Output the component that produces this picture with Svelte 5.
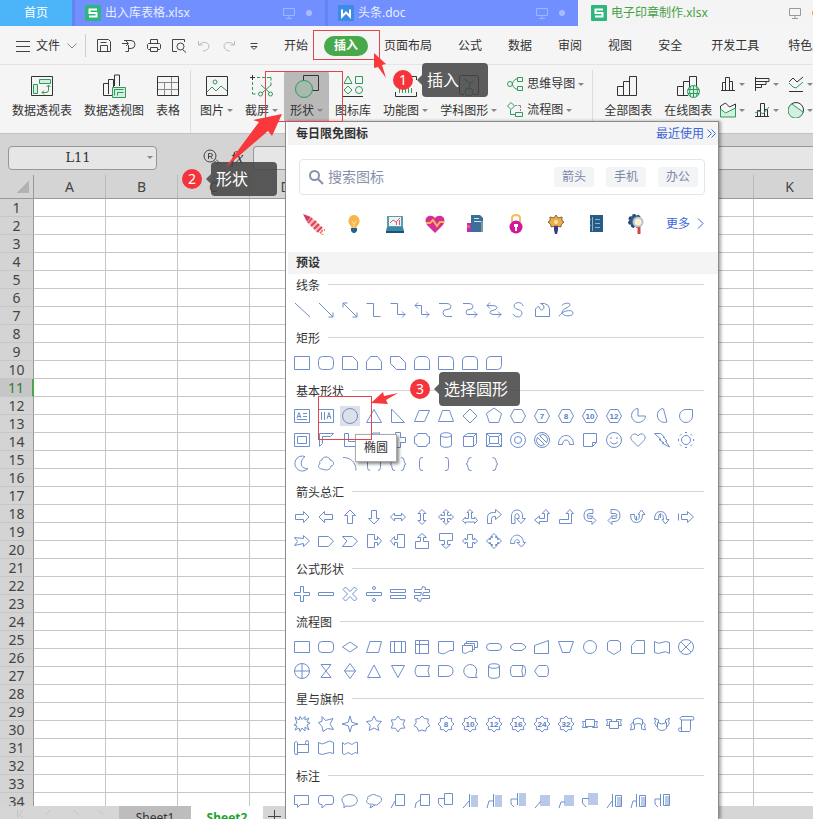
<script>
  const docs = [
    { name: '出入库表格.xlsx', kind: 'sheet' },
    { name: '头条.doc', kind: 'word' },
    { name: '电子印章制作.xlsx', kind: 'sheet', open: true }
  ];

  const quick = [
    { label: '保存', d: 'M1.5 1.5h11l2 2v10h-13zM4.5 13.5v-6h7v6M4.5 4.5h6' },
    { label: '输出', d: 'M3 2.5h7a4 4 0 0 1 0 8h-3M1 5.5h6M5 3l2.5 2.5L5 8M7.5 7v6.5h-3' },
    { label: '打印', d: 'M4.5 5.5v-4h7v4M4.5 11.5h-2l-1-1v-4l1-1h11l1 1v4l-1 1h-2M4.5 9.5h7v4h-7z' },
    { label: '打印预览', d: 'M6 13.5H1.5v-12h12V4M12 12l3 2.5M6 8.5a3.5 3.5 0 1 0 7 0a3.5 3.5 0 1 0 -7 0' },
    { label: '撤销', d: 'M2.5 3v4h4M3 7c3-4 10-3 10 1c0 3-3 5-6 5', dim: true },
    { label: '恢复', d: 'M13.5 3v4h-4M13 7c-3-4-10-3-10 1c0 3 3 5 6 5', dim: true },
    { label: '更多命令', d: 'M4.5 5.5h7M5 8.5l3 3l3-3z' }
  ];

  const menus = ['页面布局', '公式', '数据', '审阅', '视图', '安全', '开发工具', '特色应用'];

  const bars = 'M1.5 12.5h6v9h-6zM7.5 7.5h6v14h-6zM13.5 2.5h7v19h-7z';

  const pivots = [
    {
      label: '数据透视表',
      dark: 'M1.5 2.5h21v19h-21z',
      tint: 'M9.500 5.500h11v4h-11zM3.500 10.500h4v9h-4z',
      green: 'M18.500 11v5q0 2.500-2.500 2.500h-4M16.500 13l2-2l2 2M14 16.500l-2 2l2 2'
    },
    {
      label: '数据透视图',
      dark: 'M10.500 21.500h-9v-12h5M6.500 20V5.500h5V13M12.500 12v-11h5v11',
      tint: 'M10.500 13.500h13v10h-13z',
      green: 'M12.500 21.500v-6h9M15.500 21.500v-3h6'
    },
    {
      label: '表格',
      dark: 'M1.500 2.500h21v19h-21z',
      grey: 'M2 8.500h20M2 15.500h20M8.500 8.500v13M15.500 3v18'
    }
  ];

  const inserts = [
    {
      label: '图片',
      arrow: true,
      dark: 'M1.500 2.500h21v19h-21z',
      green: 'M2 18l5-5l4 4l5-5l6 5M8 8a2 2 0 1 0 4 0a2 2 0 1 0-4 0'
    },
    {
      label: '截屏',
      arrow: true,
      dark: 'M2.500 1v5M0 3.500h5',
      green: 'M7 3.500h3m2 0h3m2 0h4v3m0 2v3M2.500 8v3m0 2v3m0 2v2h3M11 11l9 8M21 11l-9 8M8.500 20a2 2 0 1 0 4 0a2 2 0 1 0-4 0M18.500 20a2 2 0 1 0 4 0a2 2 0 1 0-4 0'
    },
    {
      label: '形状',
      arrow: true,
      active: true,
      dark: 'M8.500 8V1.500h15v15h-6',
      green: 'M.500 15a8 8 0 1 0 17 0a8 8 0 1 0-17 0'
    },
    {
      label: '图标库',
      dark: 'M2 22.500h20',
      green: 'M3 9.500h8l-4-7.500zM14.500 2.500h7v7h-7zM3 16l4-4l4 4l-4 4zM14.500 16a3.500 3.500 0 1 0 7 0a3.500 3.500 0 1 0-7 0'
    },
    {
      label: '功能图',
      arrow: true,
      dark: 'M1.500 6V2.500h21V6M1.500 18v4.500h21V18',
      green: 'M5.500 14v5M8.500 14v5M11.500 14v5M14.500 14v5M17.500 14v5'
    },
    {
      label: '学科图形',
      arrow: true,
      dark: 'M7 20.500H4.500q-2 0-2-2v-15q0-2 2-2h15q2 0 2 2v15q0 2-2 2h-3',
      green: 'M7 5l6 4l4-2M13 9l-1 7M8 18a4 4 0 1 0 8 0a4 4 0 1 0-8 0'
    }
  ];

  const charts = [
    { label: '全部图表', dark: bars },
    {
      label: '在线图表',
      dark: 'M12 21.500H1.500v-9h6V21M7.500 12.500v-5h6v8M13.500 12V2.500h7V12',
      tint: 'M11.500 17.500a6 6 0 1 0 12 0a6 6 0 1 0-12 0',
      green: 'M12 15.500h11M12 19.500h11M17.500 12v11M14.500 12.500q-2 5 0 10M20.500 12.500q2 5 0 10'
    }
  ];

  const miniCharts = [
    { label: '柱形图', dark: 'M1 14.500h14M2.500 14V6.500h3V14M5.500 14V1.500h4V14M9.500 5.500h3V14' },
    { label: '条形图', dark: 'M1.500 1v14M2 2.500h13v3H2M2 5.500h10v3H2M7.500 8.500v3H2' },
    { label: '折线图', dark: 'M1 6l4-4l4 4l6-5M1 15.500h14', green: 'M1 7l4 4l3 1l7-6' },
    { label: '面积图', dark: 'M.500 15V4l5-3l4 4l6-3v13', tint: 'M.500 15V7l5 4l4-2l6-3v9z' },
    { label: '组合图', dark: 'M1 14.500h14M3.500 14V8.500h3M6.500 14V1.500h4V14M10.500 7.500h3V14', green: 'M1 11l4-2l4 3l6-7' },
    { label: '饼图', dark: 'M.500 8a7.500 7.500 0 1 0 15 0a7.500 7.500 0 1 0-15 0', tint: 'M4 2a7.500 7.500 0 1 0 11 8z' }
  ];

  // points on a ring, alternating between two radii when inner is given
  function ring(count, outer, inner = 0, turn = -90) {
    const total = inner ? count * 2 : count;
    let d = '';
    for (let i = 0; i < total; i++) {
      const r = inner && i % 2 ? inner : outer;
      const a = ((turn + (i * 360) / total) * Math.PI) / 180;
      d += (i ? 'L' : 'M') + (8 + r * Math.cos(a)).toFixed(2) + ' ' + (8 + r * Math.sin(a)).toFixed(2);
    }
    return d + 'z';
  }

  const hexagon = 'M4 1.500h8l3.500 6.500l-3.500 6.500h-8L.500 8z';
  const circle = 'M.500 8a7.500 7.500 0 1 0 15 0a7.500 7.500 0 1 0-15 0';
  const seal = ring(8, 8, 6);

  const sections = [
    {
      title: '线条',
      shapes: [
        'M1 1l15 14',
        'M1 1l14 14M15 10.500v4.500h-4.500',
        'M1 1l14 14M15 10.500v4.500h-4.500M1 5.500V1h4.500',
        'M.500 1.500h7v13h7',
        'M.500 1.500h7v11h7.500M12 9.500l3 3l-3 3',
        'M1 3.500h6.500v9H15M12 9.500l3 3l-3 3M4 .500l-3 3l3 3',
        'M1 1.500h7q5 0 5 3t-4 3q-4 0-4 3t3 4h6',
        'M1 1.500h5q5 0 5 3t-4 3q-3 0-3 3t4 2h7M12 9.500l3 3l-3 3',
        'M1 3.500h5q5 0 5 2t-4 3q-3 0-3 2t4 2h7M12 9.500l3 3l-3 3M4 .500l-3 3l3 3',
        'M13 4c-1-5-9-4-9 0c0 4 8 3 8 7c0 5-7 5-9 1',
        'M1.500 14.500V7l3-3l2 3.500c3 2 6-4 0-6h4q4.500 1 5 5v8z',
        'M4 3.500c2-3 9-3 8-.500c-1 3-7 3-8 7c0 5 11 5 11 1c0-4-11-3-14 3.500'
      ]
    },
    {
      title: '矩形',
      shapes: [
        'M.500 1.500h15v13H.500z',
        'M4.500 1.500h7q4 0 4 4v5q0 4-4 4h-7q-4 0-4-4v-5q0-4 4-4z',
        'M.500 1.500h10l5 5v8H.500z',
        'M4.500 1.500h7l4 5v8H.500v-8z',
        'M.500 1.500h9l6 6v7h-9l-6-6z',
        'M5 1.500h6q4.500 1 4.500 5v8H.500v-8q0-4 4.500-5z',
        'M.500 1.500h11q4 0 4 4v9H.500z',
        'M5 1.500h6q4.500 0 4.500 4.500v8.500H.500V6q0-4.500 4.500-4.500z',
        'M5 1.500h10.500v9q0 4-4 4H.500V6q0-4.500 4.500-4.500z'
      ]
    },
    {
      title: '基本形状',
      shapes: [
        'M.500 1.500h15v13H.500zM3 10l2-5.500l2 5.500M4 8.500h2.500M9 5.500h4M9 8.500h4M3 11.500h10',
        'M.500 1.500h15v13H.500zM3.500 4v8M6.500 4v8M9 11l2-6.500l2 6.500M9.500 8.500h3',
        { d: circle, hover: true },
        'M8 1.500l7.500 13H.500z',
        'M1.500 1v13.500h13z',
        'M5 2.500h10.500l-5 11H.500z',
        'M4.500 2.500h7l4 11H.500z',
        'M8 1l7 7l-7 7l-7-7z',
        ring(5, 8),
        hexagon,
        { d: hexagon, text: '7' },
        { d: hexagon, text: '8' },
        { d: hexagon, text: '10' },
        { d: hexagon, text: '12' },
        'M8 .500a7 7 0 1 0 7.500 7.500H8z',
        'M8 .500a7 7 0 1 0 5 13.500L9.500 1z',
        'M8 1.500h6.500V8A6.500 6.500 0 1 1 8 1.500z',
        'M.500 1.500h15v13H.500zM3.500 4.500h9v7h-9z',
        'M1.500 14.500v-13h14l-3 3h-8v7z',
        'M2.500 1.500h4v8h8v5h-12z',
        'M1 14L14 1h-7L1 7z',
        'M5.500 .500h5v5h5v5h-5v5h-5v-5h-5v-5h5z',
        'M3.500 1.500h9q0 3 3 3v7q-3 0-3 3h-9q0-3-3-3v-7q3 0 3-3z',
        'M2.500 3v10c0 3 11 3 11 0V3c0-3-11-3-11 0c0 3 11 3 11 0',
        'M1.500 4.500l4-3h9v10l-3 3h-10zM1.500 4.500h10v10M11.500 4.500l3-3',
        'M.500 1.500h15v13H.500zM3.500 4.500h9v7h-9zM.500 1.500l3 3M15.500 1.500l-3 3M.500 14.500l3-3M15.500 14.500l-3-3',
        circle + 'M4.500 8a3.500 3.500 0 1 0 7 0a3.500 3.500 0 1 0-7 0',
        circle + 'M3.500 5.500a5 5 0 0 0 7 7zM5.500 3.500a5 5 0 0 1 7 7z',
        'M.500 12.500c0-12 15-12 15 0h-4c0-6-7-6-7 0z',
        'M1.500 1.500h13v9l-4 4h-9zM10.500 14.500v-4h4',
        circle + 'M5 5v2M11 5v2M4 9.500q4 5 8 0',
        'M8 14.500L2 8.500C-2 4 5-1 8 4c3-5 10 0 6 4.500z',
        'M.500 1.500h6l4 3.500H9l4 4h-1.500l4 6L8 11h2L5 7.500h2z',
        'M3.500 8a4.500 4.500 0 1 0 9 0a4.500 4.500 0 1 0-9 0M7 .500h2M7 15.500h2M.500 7v2M15.500 7v2M2 3.500L3.500 2M14 3.500L12.500 2M2 12.500l1.500 1.500M14 12.500l-1.500 1.500',
        'M11 .500a7.500 7.500 0 1 0 3 12C5 13 6 4 11 .500z',
        'M4 4c0-4 8-4 8 0c4 0 5 6 1 6c0 4-6 5-8 3c-4 1-6-4-3-5c-1-2 0-4 2-4z',
        'M1 1.500c8 0 13 5 13 13',
        'M4 1.500q-2.500 0-2.500 3v7q0 3 2.500 3M12 1.500q2.500 0 2.500 3v7q0 3-2.500 3',
        'M5 1.500q-3 0-3 3t-2 3.500q2 0 2 3.500t3 3M11 1.500q3 0 3 3t2 3.500q-2 0-2 3.500t-3 3',
        'M9 1.500h-1q-2.500 0-2.500 3v7q0 3 2.500 3h1',
        'M7 1.500h1q2.500 0 2.500 3v7q0 3-2.500 3H7',
        'M9.500 1.500q-3.500 0-3.500 3t-2 3.500q2 0 2 3.500t3.500 3',
        'M6.500 1.500q3.500 0 3.500 3t2 3.500q-2 0-2 3.500t-3.500 3'
      ]
    },
    {
      title: '箭头总汇',
      shapes: [
        'M1.500 5.500h8v-3l5.500 5.500l-5.500 5.500v-3h-8z',
        'M14.500 5.500h-8v-3L1 8l5.500 5.500v-3h8z',
        'M5.500 14.500v-8h-3L8 1l5.500 5.500h-3v8z',
        'M5.500 1.500v8h-3L8 15l5.500-5.500h-3v-8z',
        'M.500 8l4-4v2.500h7V4l4 4l-4 4V9.500h-7V12z',
        'M8 .500l4 4H9.500v7H12l-4 4l-4-4h2.500v-7H4z',
        'M8 .500l3 3H9.500v3h3V5l3 3l-3 3V9.500h-3v3H11l-3 3l-3-3h1.500v-3h-3V11l-3-3l3-3v1.500h3v-3H5z',
        'M8 .500l3 3H9.500v6h3V8l3 3.500l-3 3V13h-9v1.500l-3-3L3.500 8v1.500h3v-6H5z',
        'M1.500 14.500v-6q0-5 6-5h2v-3l6 5l-6 5v-3h-2q-2 0-2 3v4z',
        'M1.500 14.500V7c0-8 11-8 11 0v2.500h3L11 14.500L6.500 9.500H9V7c0-3-4-3-4 0v7.500z',
        'M12 .500l3.500 4h-2v8H5.500v2.500L.500 11l5-4v2.500h5v-5H8z',
        'M12 .500l3.500 4h-2v10h-12v-4h9v-6H8z',
        'M11 .500H8q-6 0-6 6t6 6h2v3l4-4l-4-4v2H8q-3 0-3-1.500M11 .500v4H7q-2 0-2 2.500h6',
        'M5 .500h3q6 0 6 6t-6 6H6v3l-4-4l4-4v2h2q3 0 3-1.500M5 .500v4h4q2 0 2 2.500H5',
        'M.500 5.500q0 8 6 8t6-8h2.500L11.500 1L8 5.500h1.500q0 5-2 5.500M.500 5.500h4q0 6 2 6V7',
        'M.500 10.500q0-8 6-8t6 8h2.500L11.500 15L8 10.500h1.500q0-5-2-5.500M.500 10.500h4q0-6 2-6V9',
        'M.500 4.500v7M3.500 5.500h6v-3l6 5.500l-6 5.500v-3h-6z',
        'M.500 4.500l9 1v-3l6 5.500l-6 5.500v-3l-9 2l3-4z',
        'M.500 3.500h10l5 4.500l-5 5.500H.500z',
        'M.500 3.500h10l5 4.500l-5 5.500H.500L5 8z',
        'M1.500 1.500h7v5h3v-3l4 4.500l-4 4.500v-3h-3v5h-7z',
        'M14.500 1.500h-7v5h-3v-3L.500 8l4 4.500v-3h3v5h7z',
        'M1.500 15.500v-7h5v-4h-3L8 .500l4.500 4h-3v4h5v7z',
        'M1.500 .500v7h5v4h-3L8 15.500l4.500-4h-3v-4h5v-7z',
        'M.500 8l3-3v1.500h2V1.500h5v5h2V5l3 3l-3 3V9.500h-2v5h-5v-5h-2V11z',
        'M8 .500l3 3H9.500v1h2v2h1V5L15.500 8l-3 3V9.500h-1v2h-2v1H11l-3 3l-3-3h1.500v-1h-2v-2h-1V11l-3-3l3-3v1.500h1v-2h2v-1H5z',
        'M.500 10.500c0-11 12-11 13-1h2l-4 4.500l-4.500-4.500h2.500c0-4-5-4-5 1z'
      ]
    },
    {
      title: '公式形状',
      shapes: [
        'M6.500 .500h3v6h6v3h-6v6h-3v-6h-6v-3h6z',
        'M.500 6.500h15v3H.500z',
        'M1 3.500L3.500 1L8 5.500L12.500 1L15 3.500L10.500 8l4.500 4.500l-2.500 2.500L8 10.500L3.500 15L1 12.500L5.500 8z',
        'M.500 6.500h15v3H.500zM6.500 2a1.500 1.500 0 1 0 3 0a1.500 1.500 0 1 0-3 0M6.500 14a1.500 1.500 0 1 0 3 0a1.500 1.500 0 1 0-3 0',
        'M.500 3.500h15v3H.500zM.500 9.500h15v3H.500z',
        'M.500 3.500h7l1-3l3 1l-.500 2h4.500v3h-6l-1 3h7v3h-8l-1 3l-3-1l.500-2H.500v-3h6l1-3h-7z'
      ]
    },
    {
      title: '流程图',
      shapes: [
        'M.500 2.500h15v11H.500z',
        'M4 2.500h8q3.500 0 3.500 3.500v4q0 3.500-3.500 3.500H4q-3.500 0-3.500-3.500V6q0-3.500 3.500-3.500z',
        'M8 3l7.500 5L8 13L.500 8z',
        'M4 2.500h11.500l-3 11H.500z',
        'M.500 2.500h15v11H.500zM4.500 3v10M11.500 3v10',
        'M1.500 1.500h13v13h-13zM5.500 2v12M2 5.500h12',
        'M.500 2.500h15v9q-4-1-7 2t-8 0z',
        'M.500 6.500h10v6q-3-1-5 1t-5 0zM2.500 6V4.500h10v6h-2M4.500 4V2.500h11v6h-3',
        'M4 4.500h8a3.500 3.500 0 0 1 0 7H4a3.500 3.500 0 0 1 0-7z',
        'M4 4.500h8l3.500 2.500v2l-3.500 2.500H4L.500 9V7z',
        'M.500 6.500l14-5v13H.500z',
        'M.500 2.500h15l-4 11h-7z',
        'M1.500 8a6.500 6.500 0 1 0 13 0a6.500 6.500 0 1 0-13 0',
        'M4 1.500h8l2.500 2v8L8 15.500l-6.500-4v-8z',
        'M6 1.500h8.500v13h-13v-8z',
        'M.500 2.500q4 3 7.500 1t7.500 0v11q-4-3-7.500-1t-7.500 0z',
        circle + 'M3 3l10 10M13 3L3 13',
        circle + 'M8 .500v15M.500 8h15',
        'M3 1.500h10L3 14.500h10z',
        'M8 .500l5.500 7.500L8 15.500L2.500 8zM2.500 8h11',
        'M8 2l6.500 12.500h-13z',
        'M8 14.500L1.500 2.500h13z',
        'M3 2.500h12.500q-3 5 0 11H3Q-1 8 3 2.500z',
        'M.500 2.500H8q7 0 7 5.500t-7 5.500H.500z',
        'M15.500 14.500H8A6.500 6.500 0 1 1 14 11v3.500',
        'M2.500 3v10c0 3 11 3 11 0V3c0-3-11-3-11 0c0 3 11 3 11 0',
        'M3 2.500h10q2.500 0 2.500 5.500T13 13.500H3Q.500 13.500.500 8T3 2.500zM13 2.500q-2.500 5 0 11',
        'M4.500 2.500h8q2 0 2 5.500t-2 5.500h-8L.500 8z'
      ]
    },
    {
      title: '星与旗帜',
      shapes: [
        'M1 1l4 3l1-3.500l2 3l3-3v3.500l4-2l-2 4l3 1l-3 2l2 5l-4-3v4l-3-3l-2 3.500l-1-3.500l-4 2l2-4l-3-1l3-2z',
        'M4 .500l3.500 4L15 2.500L12 8l3.500 5.500l-6-1L5 15.500l-1-5L.500 6.500L4 5.500z',
        ring(4, 8, 2.5),
        ring(5, 8, 4),
        ring(6, 8, 5),
        ring(7, 8, 6),
        { d: seal, text: '8' },
        { d: seal, text: '10' },
        { d: seal, text: '12' },
        { d: seal, text: '16' },
        { d: seal, text: '24' },
        { d: seal, text: '32' },
        'M3.500 3.500h9v7h-9zM3 5.500H.500l1 3l-1 3h5v-1M13 5.500h2.500l-1 3l1 3h-5v-1',
        'M3.500 5.500h9v7h-9zM3 9.500H.500l1-3l-1-3h5v2M13 9.500h2.500l-1-3l1-3h-5v2',
        'M3.500 8.500v-5q4.500-3 9 0v5q-4.500-2-9 0zM3 6l-2.500 3l1 1l-1 4l4-1v-4M13 6l2.500 3l-1 1l1 4l-4-1v-4',
        'M3.500 6.500v6q4.500 4 9 0v-6q-4.500 3-9 0zM3 11L.500 7l1-1l-1-4l4 2v3M13 11l2.500-4l-1-1l1-4l-4 2v3',
        'M4 .500h10q2 0 2 2t-2 1.500H4Q2 4 2 2.500T4 .500zM3.500 4v8H2q-1.500 0-1.500 1.500T2 15.500h9.500q1-1 1-2V4M3.500 12v3',
        'M3.500 4.500h8v-2q0-2 1.500-2t1.500 2v10h-11M3.500 2.500v12q-3 1-3-2v-10q2-2 3 0M11.500 4.500h3',
        'M.500 2.500q4 3 7.500 0t7.500 0v11q-4-2-7.500 0t-7.500 0z',
        'M.500 2.500q2 3 4 1q2-2 3.500 0q2 2 3.500 0q2-2 4-1v11q-2-2-4 0q-2 2-3.500 0q-2-2-3.500 0q-2 2-4 0z'
      ]
    },
    {
      title: '标注',
      shapes: [
        'M.500 2.500h14v9h-8l-3 3v-3h-3z',
        'M3 2.500h10q2.500 0 2.500 2.500v4q0 2.500-2.500 2.500H8l-4 3.500v-3.500H3Q.500 11.500.500 9V5Q.500 2.500 3 2.500z',
        'M4 13l-2 2v-4c-5-5 0-9.500 6-9.500s10 6 5 10c-3 2-6 2-9 1.500z',
        'M4 3c3-3 6-1 7 0c5-1 6 6 2 7c-1 3-6 2-6 1c-6 1-8-3-5-5c-1-2 0-3 2-3M5 12l-1 3l5-3',
        'M5.500 1.500h9v11h-9zM1 15l4-7',
        'M6.500 1.500h9v11h-9zM1 15l1-5l4-3',
        'M6.500 .500h8v11h-8zM6 5.500H.500v5l4 4',
        { d: 'M1 15l6-7M7.500 1v13', fill: 'M9 2h7v12H9z' },
        { d: 'M1 15l2-7h4M7.500 1v13', fill: 'M9 2h7v12H9z' },
        { d: 'M4 14l-3-3V6h6M7.500 0v12', fill: 'M9 0h7v13H9z' },
        { d: 'M1 15l6-7', fill: 'M6 2h10v11H6z' },
        { d: 'M1 15l2-6h4', fill: 'M6 2h10v11H6z' },
        { d: 'M4 14l-3.500-4V5.500H7', fill: 'M6 0h10v12H6z' },
        { d: 'M1 15l5-7M6.500 1v13M9.500 2.500h6v11h-6z', fill: 'M11 4h4v9h-4z' },
        { d: 'M1 15l2-7h3M6.500 1v13M9.500 2.500h6v11h-6z', fill: 'M11 4h4v9h-4z' },
        { d: 'M4 14l-3-3V6h5M6.500 1v12M9.500 1.500h6v11h-6z', fill: 'M11 3h4v9h-4z' }
      ]
    }
  ];

  const columns = 'ABCDEFGHIJKL'.split('');
  const rows = Array.from({ length: 34 }, (_, i) => i + 1);

  let cell = $state('L11');
  let query = $state('');
</script>

{#snippet glyph(icon, size)}
  <svg class="glyph" width={size} height={size} viewBox="0 0 {size} {size}" aria-hidden="true">
    {#if icon.grey}<path class="grey" d={icon.grey} />{/if}
    {#if icon.dark}<path class="dark" d={icon.dark} />{/if}
    {#if icon.tint}<path class="tint" d={icon.tint} />{/if}
    {#if icon.green}<path class="green" d={icon.green} />{/if}
  </svg>
{/snippet}

{#snippet tool(item)}
  <button class="tool" class:active={item.active}>
    {@render glyph(item, 24)}
    <span class="label">{item.label}{#if item.arrow}<i class="caret"></i>{/if}</span>
  </button>
{/snippet}

<div class="app">
  <nav class="tabs">
    <button class="home">首页</button>
    {#each docs as doc}
      <button class="doc" class:open={doc.open}>
        <svg class="doc-icon {doc.kind}" width="16" height="16" viewBox="0 0 16 16" aria-hidden="true">
          <rect width="16" height="16" rx="1" />
          {#if doc.kind === 'word'}
            <path d="M4 4.500v7l4-4l4 4v-7" />
          {:else}
            <path d="M12 4.500H4.500V8h7v3.500H4" />
          {/if}
        </svg>
        <span class="doc-name">{doc.name}</span>
        <svg class="screen" width="12" height="12" viewBox="0 0 12 12" aria-hidden="true">
          <path d="M.500 1.500h11v7H.500zM6 9v2M3 11.500h6" />
        </svg>
        <i class="dot"></i>
      </button>
    {/each}
  </nav>

  <div class="menubar">
    <button class="file">
      <svg width="14" height="12" viewBox="0 0 14 12" aria-hidden="true"><path d="M0 1.500h14M0 6.500h14M0 11.500h14" /></svg>
      文件
      <svg class="chevron" width="10" height="6" viewBox="0 0 10 6" aria-hidden="true"><path d="M.500 .500L5 5L9.500 .500" /></svg>
    </button>
    <div class="quick">
      {#each quick as q}
        <button aria-label={q.label} class:dim={q.dim}>
          <svg width="16" height="16" viewBox="0 0 16 16" aria-hidden="true"><path d={q.d} /></svg>
        </button>
      {/each}
    </div>
    <button class="menu">开始</button>
    <button class="menu current">插入</button>
    {#each menus as menu}
      <button class="menu" class:spaced={menu === '开发工具'}>{menu}</button>
    {/each}
  </div>

  <div class="ribbon">
    <div class="group">
      {#each pivots as item}{@render tool(item)}{/each}
    </div>
    <div class="group inserts">
      {#each inserts as item}{@render tool(item)}{/each}
      <div class="stack">
        <button>
          {@render glyph({ green: 'M5 8q3-6 5-5M5 8q3 6 5 5M.500 8a2.500 2.500 0 1 0 5 0a2.500 2.500 0 1 0-5 0M10.500 1.500h5v4h-5zM10.500 10.500h5v4h-5z' }, 16)}
          思维导图<i class="caret"></i>
        </button>
        <button>
          {@render glyph({ grey: 'M8 3.500h2m1 0h2.500V6m0 1v2', green: 'M4 .500L7.500 4L4 7.500L.500 4zM3.500 8v4.500H8M8.500 10.500h7v4h-7z' }, 16)}
          流程图<i class="caret"></i>
        </button>
      </div>
    </div>
    <div class="group">
      {#each charts as item}{@render tool(item)}{/each}
      <div class="minis">
        {#each miniCharts as mini}
          <button aria-label={mini.label}>{@render glyph(mini, 16)}<i class="caret"></i></button>
        {/each}
      </div>
    </div>
  </div>

  <div class="formula">
    <div class="namebox">
      <input aria-label="名称框" bind:value={cell} />
      <i class="caret"></i>
    </div>
    <svg class="find" width="18" height="18" viewBox="0 0 18 18" aria-hidden="true">
      <circle cx="7" cy="7" r="6" />
      <path d="M5.500 10V4.500h2q2 0 2 1.500t-2 1.500h-2M7.500 7.500L9.500 10M11 11.500l5 5M13 10.500l4 4" />
    </svg>
    <span class="fx">fx</span>
    <input class="bar" aria-label="编辑栏" />
  </div>

  <main>
    <table>
      <thead>
        <tr>
          <th class="corner"><i></i></th>
          {#each columns as col}<th>{col}</th>{/each}
        </tr>
      </thead>
      <tbody>
        {#each rows as row}
          <tr>
            <th class:selected={row === 11}>{row}</th>
            {#each columns as col}<td></td>{/each}
          </tr>
        {/each}
      </tbody>
    </table>
  </main>

  <footer>
    <svg class="steps" width="86" height="12" viewBox="0 0 86 12" aria-hidden="true">
      <path d="M.500 4v8M6 4l-4 5l4 3M34 4l-6 5M56 4l6 5M82 4l4 5" />
    </svg>
    <button class="page">Sheet1</button>
    <button class="page shown">Sheet2</button>
    <button class="add" aria-label="新建工作表">
      <svg width="14" height="14" viewBox="0 0 14 14" aria-hidden="true"><path d="M7.500 1v13M1 7.500h13" /></svg>
    </button>
  </footer>

  <section class="panel">
    <header>
      <h2>每日限免图标</h2>
      <a href="#recent">最近使用
        <svg width="9" height="9" viewBox="0 0 9 9" aria-hidden="true"><path d="M.500 .500l4 4l-4 4M4.500 .500l4 4l-4 4" /></svg>
      </a>
    </header>

    <div class="search">
      <svg width="16" height="16" viewBox="0 0 16 16" aria-hidden="true"><path d="M2 6.500a4.500 4.500 0 1 0 9 0a4.500 4.500 0 1 0-9 0M10 10l5 5" /></svg>
      <input aria-label="搜索图标" placeholder="搜索图标" bind:value={query} />
      <button>箭头</button>
      <button>手机</button>
      <button>办公</button>
    </div>

    <div class="daily">
      <svg width="22" height="22" viewBox="0 0 22 22">
        <path fill="#d63a62" d="M0 1l8 3l-4 5z" />
        <path fill="#f8b9b4" d="M8 4l11 10l-5 5L4 9z" />
        <path stroke="#e0405c" stroke-width="2" d="M9 5l-4 5M13 8l-5 5M16 11l-5 5M19 14l-5 5" />
        <path stroke="#ef7c68" stroke-width="2" stroke-dasharray="2 1" d="M18 18l4-1M17 19l3 3" />
      </svg>
      <svg width="22" height="22" viewBox="0 0 22 22">
        <path fill="#f7b64b" d="M11 2a6 6 0 0 0-4 10l2 3h4l2-3A6 6 0 0 0 11 2z" />
        <path stroke="#fbe09a" d="M9 8l2 3l2-3M11 10v5" />
        <path fill="#27628f" d="M8 15h6v3l-2 2h-2l-2-2z" />
      </svg>
      <svg width="22" height="22" viewBox="0 0 22 22">
        <path fill="#5a9cac" d="M3 3h16v11H3z" />
        <path fill="#edf5f5" d="M5 4h12v9H5z" />
        <path stroke="#e45770" d="M6 10l3-3l3 2l4-4M12.500 12V9M15.500 12V7" />
        <path fill="#3989a5" d="M3 14h16l1 4H2z" />
        <path fill="#1c527a" d="M2 18h18v2H2z" />
      </svg>
      <svg width="22" height="22" viewBox="0 0 22 22">
        <path fill="#d72e93" d="M11 20L3 12C-2 4 7 0 11 5c4-5 13-1 8 7z" />
        <path stroke="#ffb45c" stroke-width="2" fill="none" d="M2 10h4l3-3l4 6l3-4h4" />
      </svg>
      <svg width="22" height="22" viewBox="0 0 22 22">
        <path fill="#3b6f9a" d="M7 2h9l3 3v14H7z" />
        <path stroke="#d5e6ee" d="M10 5.500h5M10 8.500h7" />
        <path fill="#7b9ba4" d="M17 8h2v11h-2z" />
        <path fill="#bb2db1" d="M3 10h4v9H3z" />
        <path fill="#f05c78" d="M3 12h3v3H3z" />
      </svg>
      <svg width="22" height="22" viewBox="0 0 22 22">
        <path stroke="#f5bd5d" stroke-width="2" fill="none" d="M7 9V5q0-3 4-3t4 3v4" />
        <circle cx="11" cy="14" r="6.500" fill="#d3179b" />
        <path fill="#fff" d="M9 11h4v3h-1v4h-2v-4H9z" />
      </svg>
      <svg width="22" height="22" viewBox="0 0 22 22">
        <path fill="#edae48" stroke="#84693b" d="M11 2l2 3l4-1v4l2 1l-3 3v2l-5-1l-5 1v-2L3 9l2-1V4l4 1z" />
        <circle cx="11" cy="9" r="2" fill="#fbe8a6" />
        <path fill="#303c91" d="M9 13h4v4l-1 4h-2l-1-4z" />
      </svg>
      <svg width="22" height="22" viewBox="0 0 22 22">
        <path fill="#255d88" d="M5 2h13v17H5z" />
        <path stroke="#8cb5cb" d="M7.500 4v14M10 6.500h5M10 10.500h5M10 14.500h5M5 6.500h1M5 12.500h1" />
      </svg>
      <svg width="22" height="22" viewBox="0 0 22 22">
        <circle cx="9" cy="8" r="6" fill="#315a91" stroke="#254270" stroke-width="2" stroke-dasharray="3 2" />
        <circle cx="12" cy="9" r="4.500" fill="#fff0ce" stroke="#b5c5cc" stroke-width="2" />
        <path stroke="#cc4942" stroke-width="3" d="M13 14v7" />
      </svg>
      <a class="more" href="#more">更多
        <svg width="7" height="11" viewBox="0 0 7 11" aria-hidden="true"><path d="M1 .500l5 5l-5 5" /></svg>
      </a>
    </div>

    <h2 class="preset">预设</h2>
    {#each sections as section}
      <div class="shapes">
        <h3>{section.title}</h3>
        <div class="cells">
          {#each section.shapes as shape}
            <button class:hover={shape.hover} aria-label={section.title}>
              <svg width="16" height="16" viewBox="0 0 16 16" aria-hidden="true">
                {#if shape.fill}<path class="fill" d={shape.fill} />{/if}
                <path d={shape.d ?? shape} />
                {#if shape.text}<text x="8" y="11">{shape.text}</text>{/if}
              </svg>
            </button>
          {/each}
        </div>
      </div>
    {/each}
  </section>

  <div class="hint">椭圆</div>

  <div class="frame frame-insert"></div>
  <div class="frame frame-shape"></div>
  <div class="frame frame-oval"></div>
  <div class="note note-insert"><b>1</b><span>插入</span></div>
  <div class="note note-shape"><b>2</b><span>形状</span></div>
  <div class="note note-oval"><b>3</b><span>选择圆形</span></div>
  <svg class="arrows" width="420" height="420" viewBox="0 0 420 420" aria-hidden="true">
    <path d="M374 53l12 11l-4 1l4 13l-8-11l-4 1z" />
    <path d="M282 114l-10 22l-4-5l-43 37l34-46l-6-2z" />
    <path d="M371 403l12-11l1 4l14-3l-12 7l2 4z" />
  </svg>
</div>

<style>
  :global(body) {
    margin: 0;
  }

  .app {
    position: relative;
    display: flex;
    flex-direction: column;
    height: 100vh;
    overflow: hidden;
    background: #d4d4d4;
    color: #333;
    font: 12px/16px "Noto Sans", "Noto Sans CJK SC", sans-serif;
  }

  button,
  input {
    margin: 0;
    padding: 0;
    border: 0;
    background: none;
    color: inherit;
    font: inherit;
    white-space: nowrap;
  }

  svg {
    flex: none;
    fill: none;
  }

  h2,
  h3 {
    margin: 0;
    font-size: 12px;
  }

  a {
    color: #3d66d6;
    text-decoration: none;
  }

  a svg {
    stroke: #3d66d6;
  }

  .caret {
    display: inline-block;
    flex: none;
    margin-left: 3px;
    border: 3px solid transparent;
    border-top-color: #888;
    border-bottom: 0;
    vertical-align: 3px;
  }

  /* document tabs */
  .tabs {
    display: flex;
    flex: none;
    height: 26px;
    background: #f4f4f4;
    color: #e8eeff;
  }

  .home {
    flex: 0 0 72px;
    background: #4cb5fa;
    color: #fff;
  }

  .doc {
    display: flex;
    flex: 0 0 253px;
    align-items: center;
    box-sizing: border-box;
    padding: 0 13px 0 10px;
    border-left: 3px solid #6385f4;
    background: #718fff;
  }

  .doc.open {
    border-color: #f4f4f4;
    background: #f4f4f4;
    color: #45a147;
  }

  .doc-icon {
    margin-right: 4px;
    stroke: #fff;
    stroke-width: 2;
  }

  .doc-icon rect {
    stroke: none;
  }

  .sheet rect {
    fill: #2fb67c;
  }

  .word rect {
    fill: #3c8be6;
  }

  .doc-name {
    flex: 1;
    text-align: left;
  }

  .screen {
    margin-right: 11px;
    stroke: #a0b4ff;
  }

  .open .screen {
    stroke: #999;
  }

  .dot {
    width: 6px;
    height: 6px;
    border-radius: 50%;
    background: #a9bbff;
  }

  .open .dot {
    background: #f79646;
  }

  /* menu row */
  .menubar {
    display: flex;
    flex: none;
    align-items: center;
    height: 39px;
    padding-top: 1px;
    background: #f5f5f5;
    border-bottom: 1px solid #e4e4e4;
    box-sizing: border-box;
  }

  .file {
    display: flex;
    align-items: center;
    gap: 6px;
    height: 23px;
    padding: 0 8px 0 16px;
    border-right: 1px solid #ccc;
    stroke: #444;
  }

  .chevron {
    margin-left: 1px;
    stroke: #888;
  }

  .quick {
    display: flex;
    padding: 0 5px;
  }

  .quick button {
    width: 25px;
    height: 16px;
    stroke: #444;
  }

  .quick .dim {
    stroke: #bbb;
  }

  .menu {
    flex: none;
    padding: 0 13px;
  }

  .current {
    height: 20px;
    margin: 0 3px;
    padding: 0 10px;
    border-radius: 10px;
    background: #48a94b;
    color: #fff;
    font-weight: bold;
  }

  .spaced {
    margin: 0 3px;
  }

  /* ribbon */
  .ribbon {
    display: flex;
    flex: none;
    height: 68px;
    background: #f5f5f5;
    overflow: hidden;
  }

  .group {
    display: flex;
    flex: none;
    align-items: flex-start;
    padding: 6px 4px 0 6px;
  }

  .group + .group {
    background: linear-gradient(#ddd, #ddd) 0 5px / 1px 100% no-repeat;
  }

  .group.inserts {
    padding-right: 8px;
    padding-left: 4px;
  }

  .tool {
    display: flex;
    flex-direction: column;
    align-items: center;
    gap: 5px;
    height: 51px;
    padding: 3px 6px 0;
    box-sizing: border-box;
  }

  .tool.active {
    border-radius: 3px 3px 0 0;
    background: #b9b9b9;
  }

  .active .green {
    fill: #a8b9ae;
  }

  .glyph .dark {
    stroke: #333;
  }

  .glyph .grey {
    stroke: #888;
  }

  .glyph .green {
    stroke: #2f9a5c;
  }

  .glyph .tint {
    fill: #d3efe0;
    stroke: #2f9a5c;
  }

  .stack {
    display: grid;
    justify-items: start;
    padding-left: 4px;
  }

  .stack button,
  .minis button {
    display: flex;
    align-items: center;
    height: 26px;
  }

  .stack .glyph {
    margin-right: 4px;
  }

  .minis {
    display: grid;
    grid-template-columns: repeat(3, 34px);
    padding-left: 2px;
  }

  /* name box and formula bar */
  .formula {
    display: flex;
    flex: none;
    align-items: center;
    height: 42px;
    padding: 6px 0 0 8px;
    box-sizing: border-box;
    border-top: 1px solid #c4c4c4;
  }

  .namebox {
    display: flex;
    align-items: center;
    width: 149px;
    height: 24px;
    box-sizing: border-box;
    padding: 0 3px;
    border: 1px solid #969696;
    border-radius: 4px;
    background: #e6e6e6;
  }

  .namebox input {
    flex: 1;
    min-width: 0;
    text-align: center;
    font: 13px/18px "DejaVu Serif", serif;
  }

  .find {
    margin: 0 10px 0 46px;
    stroke: #444;
  }

  .fx {
    width: 22px;
    font: italic 17px/20px "Liberation Serif", serif;
  }

  .bar {
    flex: 1;
    height: 22px;
    border: 1px solid #969696;
    border-right: 0;
    border-radius: 4px 0 0 4px;
    background: #e6e6e6;
  }

  /* cells */
  main {
    flex: 1;
    min-height: 0;
    overflow: hidden;
  }

  table {
    width: 898px;
    table-layout: fixed;
    border-spacing: 0;
    background: #fff;
  }

  th,
  td {
    width: 72px;
    height: 18px;
    padding: 0;
    box-sizing: border-box;
    border-right: 1px solid #c6c6c6;
    border-bottom: 1px solid #c6c6c6;
  }

  th {
    background: #d4d4d4;
    color: #444;
    font-size: 14px;
    line-height: 17px;
    font-weight: normal;
  }

  thead th {
    height: 24px;
    border-bottom-color: #999;
    border-right-color: #bbb;
  }

  th:first-child {
    width: 34px;
    border-right-color: #999;
  }

  .corner i {
    display: block;
    margin-left: 17px;
    width: 12px;
    height: 12px;
    background: linear-gradient(135deg, transparent 50%, #b2b2b2 50%);
  }

  tbody .selected {
    background: #c6c6c6;
    border-right: 2px solid #4aa64c;
    color: #2c7d3c;
  }

  /* sheet tabs */
  footer {
    display: flex;
    flex: none;
    height: 13px;
    overflow: hidden;
    background: #d6d6d6;
  }

  .steps {
    margin: 0 16px 0 17px;
    stroke: #c4c4c4;
  }

  .page {
    width: 72px;
    height: 24px;
    background: #bdbdbd;
  }

  .shown {
    background: #fff;
    color: #23a12b;
    font-weight: bold;
  }

  .add {
    align-self: flex-start;
    height: 14px;
    margin: 3px 4px 0;
    stroke: #444;
  }

  /* shape picker */
  .panel {
    position: absolute;
    top: 121px;
    bottom: 0;
    left: 285px;
    width: 434px;
    box-sizing: border-box;
    overflow: hidden;
    border: 1px solid #8b8b8b;
    border-bottom: 0;
    background: #fff;
    box-shadow: 2px 0 3px #0005;
  }

  .panel header {
    display: flex;
    align-items: center;
    justify-content: space-between;
    height: 23px;
    margin-left: 2px;
    padding: 1px 2px 0 8px;
    box-sizing: border-box;
    background: #f4f4f4;
  }

  .search {
    display: flex;
    align-items: center;
    gap: 12px;
    height: 36px;
    margin: 14px 13px 0;
    padding: 0 6px 0 8px;
    box-sizing: border-box;
    border: 1px solid #e2e5ec;
    border-radius: 4px;
    color: #7c88a6;
  }

  .search svg {
    margin-right: -8px;
    stroke: #8791aa;
    stroke-width: 2;
  }

  .search input {
    flex: 1;
    min-width: 0;
    font-size: 14px;
    line-height: 20px;
  }

  .search input::placeholder {
    color: #8791aa;
  }

  .search button {
    width: 40px;
    height: 20px;
    border-radius: 3px;
    background: #f3f4f6;
  }

  .daily {
    display: flex;
    align-items: center;
    justify-content: space-between;
    height: 57px;
    padding: 0 14px 0 17px;
    box-sizing: border-box;
  }

  .more {
    display: flex;
    align-items: center;
    gap: 7px;
  }

  .preset {
    margin-left: 2px;
    padding: 0 8px;
    background: #f4f4f4;
    line-height: 22px;
  }

  .shapes {
    margin: 0 14px 5px 4px;
  }

  h3 {
    display: flex;
    align-items: center;
    gap: 8px;
    padding-left: 6px;
    font-weight: normal;
    line-height: 24px;
  }

  h3::after {
    content: "";
    flex: 1;
    height: 1px;
    margin-bottom: 3px;
    background: #d5d5d5;
  }

  .cells {
    display: grid;
    grid-template-columns: repeat(17, 24px);
  }

  .cells button {
    display: flex;
    align-items: center;
    justify-content: center;
    height: 24px;
  }

  .cells .hover {
    padding: 2px;
    background: #dde0e9;
    background-clip: content-box;
  }

  .cells svg {
    overflow: visible;
    stroke: #6f8fcb;
  }

  .cells text {
    fill: #5a7ec2;
    stroke: none;
    font: bold 8px "Liberation Sans", sans-serif;
    text-anchor: middle;
  }

  .cells .fill {
    fill: #b9c9e9;
    stroke: none;
  }

  .hint {
    position: absolute;
    top: 434px;
    left: 355px;
    padding: 5px 8px;
    border: 1px solid #aaa;
    background: #fff;
    box-shadow: 2px 2px 3px #0007;
  }

  /* walkthrough marks */
  .frame {
    position: absolute;
    box-sizing: border-box;
    border: 1px solid #e0454b;
  }

  .frame-insert {
    top: 30px;
    left: 313px;
    width: 67px;
    height: 30px;
  }

  .frame-shape {
    top: 71px;
    left: 265px;
    width: 78px;
    height: 51px;
  }

  .frame-oval {
    top: 396px;
    left: 318px;
    width: 54px;
    height: 44px;
  }

  .note {
    position: absolute;
    display: flex;
    align-items: center;
    color: #fff;
  }

  .note b {
    width: 20px;
    border-radius: 50%;
    background: #f5333b;
    font-size: 14px;
    font-weight: normal;
    line-height: 20px;
    text-align: center;
  }

  .note::before {
    content: "";
    order: 1;
    margin-left: 4px;
    border: 5px solid transparent;
    border-right-color: #555e;
    border-left: 0;
  }

  .note span {
    order: 2;
    min-width: 49px;
    padding: 5px 12px 5px 5px;
    border-radius: 4px;
    background: #444d;
    font-size: 16px;
    line-height: 24px;
  }

  .note-insert {
    top: 63px;
    left: 393px;
  }

  .note-shape {
    top: 162px;
    left: 182px;
  }

  .note-oval {
    top: 372px;
    left: 410px;
  }

  .arrows {
    position: absolute;
    top: 0;
    left: 0;
    fill: #f8383a;
    pointer-events: none;
  }
</style>
